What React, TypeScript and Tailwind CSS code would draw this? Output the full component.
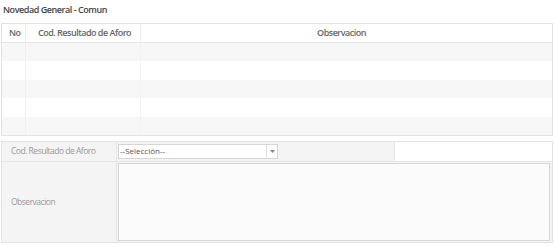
const rows = [0, 1, 2, 3, 4];

export default function App() {
  return (
    <div className="w-[555px] h-[246px] bg-white font-['Open_Sans',sans-serif] text-[#555] overflow-hidden">
      <div className="h-[23px] pl-[3px] pt-[3px] text-[9px] font-semibold tracking-[-0.45px] text-[#444]">
        Novedad General - Comun
      </div>

      <div className="ml-px w-[552px] border border-[#e3e3e3]">
        <div className="flex h-[19px] items-center border-b border-[#e6e6e6] text-[9px] font-semibold tracking-[-0.5px] text-[#666]">
          <div className="w-[23px] pl-[7px]">No</div>
          <div className="w-[115px] h-full flex items-center border-l border-[#ececec] pl-[12px]">
            Cod. Resultado de Aforo
          </div>
          <div className="flex-1 h-full flex items-center justify-center border-l border-[#ececec] pr-[10px]">
            Observacion
          </div>
        </div>
        {rows.map((r) => (
          <div
            key={r}
            className={`flex h-[18.4px] ${r % 2 === 0 ? 'bg-[#f7f7f7]' : 'bg-white'}`}
          >
            <div className="w-[23px]" />
            <div className="w-[115px] border-l border-[#f0f0f0]" />
            <div className="flex-1 border-l border-[#f3f3f3]" />
          </div>
        ))}
      </div>

      <div className="ml-px mt-[5px] w-[552px] border border-[#e3e3e3] text-[8.5px] tracking-[-0.5px] text-[#999]">
        <div className="flex h-[20px] border-b border-[#e6e6e6]">
          <div className="w-[115px] bg-[#f4f4f4] flex items-center pl-[9px] border-r border-[#e6e6e6]">
            Cod. Resultado de Aforo
          </div>
          <div className="w-[277px] bg-[#f4f4f4] flex items-center pl-px">
            <div className="flex h-[15px] w-[160px] border border-[#d6d6d6] bg-white">
              <div className="flex-1 flex items-center pl-[1px] text-[8px] tracking-normal text-[#555]">--Selección--</div>
              <div className="w-[11px] border-l border-[#e0e0e0] flex items-center justify-center">
                <svg width="5" height="3" viewBox="0 0 5 3">
                  <path d="M0 0 L5 0 L2.5 3 Z" fill="#888" />
                </svg>
              </div>
            </div>
          </div>
          <div className="flex-1 bg-white border-l border-[#e6e6e6]" />
        </div>
        <div className="flex h-[80px]">
          <div className="w-[115px] bg-[#f4f4f4] flex items-center pl-[9px] border-r border-[#e6e6e6]">
            Observacion
          </div>
          <div className="flex-1 bg-[#f4f4f4] pl-px py-px pr-[2px]">
            <div className="h-full border border-[#d8d8d8] bg-[#fbfbfb]" />
          </div>
        </div>
      </div>
    </div>
  );
}
